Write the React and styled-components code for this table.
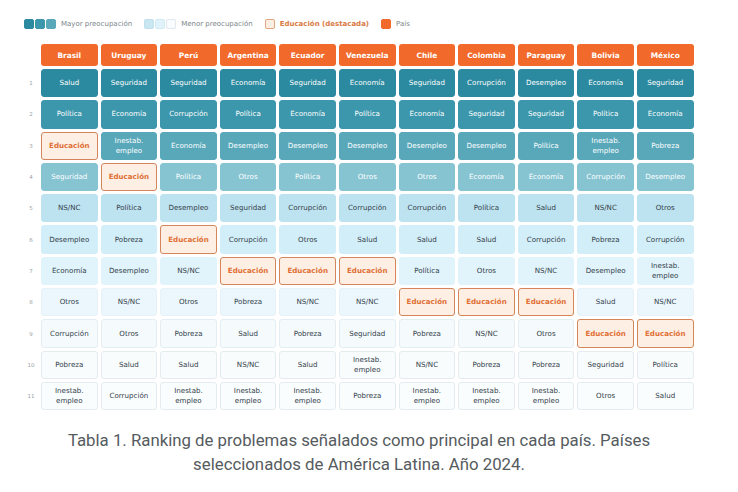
import React from "react";
import styled, { createGlobalStyle } from "styled-components";

const GlobalStyle = createGlobalStyle`
  body {
    margin: 0;
    background: #ffffff;
    font-family: "DejaVu Sans", sans-serif;
  }
`;

const countries = [
  "Brasil", "Uruguay", "Perú", "Argentina", "Ecuador", "Venezuela",
  "Chile", "Colombia", "Paraguay", "Bolivia", "México",
];

const ranking = {
  Brasil: ["Salud", "Política", "Educación", "Seguridad", "NS/NC", "Desempleo", "Economía", "Otros", "Corrupción", "Pobreza", "Inestab. empleo"],
  Uruguay: ["Seguridad", "Economía", "Inestab. empleo", "Educación", "Política", "Pobreza", "Desempleo", "NS/NC", "Otros", "Salud", "Corrupción"],
  "Perú": ["Seguridad", "Corrupción", "Economía", "Política", "Desempleo", "Educación", "NS/NC", "Otros", "Pobreza", "Salud", "Inestab. empleo"],
  Argentina: ["Economía", "Política", "Desempleo", "Otros", "Seguridad", "Corrupción", "Educación", "Pobreza", "Salud", "NS/NC", "Inestab. empleo"],
  Ecuador: ["Seguridad", "Economía", "Desempleo", "Política", "Corrupción", "Otros", "Educación", "NS/NC", "Pobreza", "Salud", "Inestab. empleo"],
  Venezuela: ["Economía", "Política", "Desempleo", "Otros", "Corrupción", "Salud", "Educación", "NS/NC", "Seguridad", "Inestab. empleo", "Pobreza"],
  Chile: ["Seguridad", "Economía", "Desempleo", "Otros", "Corrupción", "Salud", "Política", "Educación", "Pobreza", "NS/NC", "Inestab. empleo"],
  Colombia: ["Corrupción", "Seguridad", "Desempleo", "Economía", "Política", "Salud", "Otros", "Educación", "NS/NC", "Pobreza", "Inestab. empleo"],
  Paraguay: ["Desempleo", "Seguridad", "Política", "Economía", "Salud", "Corrupción", "NS/NC", "Educación", "Otros", "Pobreza", "Inestab. empleo"],
  Bolivia: ["Economía", "Política", "Inestab. empleo", "Corrupción", "NS/NC", "Pobreza", "Desempleo", "Salud", "Educación", "Seguridad", "Otros"],
  "México": ["Seguridad", "Economía", "Pobreza", "Desempleo", "Otros", "Corrupción", "Inestab. empleo", "NS/NC", "Educación", "Política", "Salud"],
};

// shade per rank, darkest first
const shades = [
  { bg: "#2b8a9f", border: "#2b8a9f", fg: "#ffffff" },
  { bg: "#3c97ac", border: "#3c97ac", fg: "#ffffff" },
  { bg: "#58a8ba", border: "#58a8ba", fg: "#ffffff" },
  { bg: "#86c4d1", border: "#86c4d1", fg: "#ffffff" },
  { bg: "#bee3f0", border: "#bee3f0", fg: "#33414a" },
  { bg: "#d2eef8", border: "#d2eef8", fg: "#33414a" },
  { bg: "#e1f4fb", border: "#e1f4fb", fg: "#33414a" },
  { bg: "#ebf7fd", border: "#e6f2f7", fg: "#33414a" },
  { bg: "#f5fbfd", border: "#e4edf1", fg: "#33414a" },
  { bg: "#f8fcfd", border: "#e4ecf0", fg: "#33414a" },
  { bg: "#fafdfe", border: "#e4ecef", fg: "#33414a" },
];

const Page = styled.div`
  width: 738px;
  height: 492px;
  padding: 17px 0 0 22px;
  box-sizing: border-box;
`;

const Legend = styled.div`
  display: flex;
  align-items: center;
  gap: 12px;
  height: 14px;
  padding-left: 2px;
  font-size: 7px;
  color: #7c8589;
`;

const LegendItem = styled.div`
  display: flex;
  align-items: center;
  gap: 5px;
  color: ${(p) => p.$color || "#7c8589"};
  font-weight: ${(p) => (p.$bold ? 700 : 400)};
`;

const Swatches = styled.div`
  display: flex;
  gap: 1px;
`;

const Swatch = styled.span`
  width: 8px;
  height: 8px;
  border-radius: 2px;
  background: ${(p) => p.$bg};
  border: 1px solid ${(p) => p.$border || p.$bg};
`;

const Table = styled.div`
  display: grid;
  grid-template-columns: 16px repeat(11, 56.6px);
  grid-template-rows: 22px repeat(11, 28.3px);
  column-gap: 3px;
  row-gap: 3px;
  margin-top: 13px;
`;

const Corner = styled.div``;

const Header = styled.div`
  border-radius: 3px;
  background: #f26a2b;
  color: #ffffff;
  font-size: 7.4px;
  font-weight: 700;
  display: flex;
  align-items: center;
  justify-content: center;
`;

const Rank = styled.div`
  display: flex;
  align-items: center;
  justify-content: center;
  font-size: 5.5px;
  color: #9aa2a6;
  margin-left: 2px;
`;

const Cell = styled.div`
  border-radius: 3px;
  box-sizing: border-box;
  display: flex;
  align-items: center;
  justify-content: center;
  text-align: center;
  font-size: 7.1px;
  line-height: 10px;
  padding: 0 4px;
  background: ${(p) => (p.$edu ? "#fdefe4" : p.$shade.bg)};
  border: ${(p) => (p.$edu ? "1.5px solid #d4855a" : `1px solid ${p.$shade.border}`)};
  color: ${(p) => (p.$edu ? "#e06f35" : p.$shade.fg)};
  font-weight: ${(p) => (p.$edu ? 700 : 500)};
`;

const Caption = styled.p`
  margin: 18px 0 0 -22px;
  width: 718px;
  text-align: center;
  font-family: Roboto, "Liberation Sans", sans-serif;
  font-size: 16.8px;
  line-height: 24px;
  color: #555b5e;
`;

export default function App() {
  return (
    <Page>
      <GlobalStyle />
      <Legend>
        <LegendItem>
          <Swatches>
            <Swatch $bg="#2b8a9f" />
            <Swatch $bg="#3c97ac" />
            <Swatch $bg="#58a8ba" />
          </Swatches>
          Mayor preocupación
        </LegendItem>
        <LegendItem>
          <Swatches>
            <Swatch $bg="#c8e7f2" $border="#bfe1ee" />
            <Swatch $bg="#e0f3fa" $border="#d3eaf3" />
            <Swatch $bg="#f8fcfd" $border="#dfe9ee" />
          </Swatches>
          Menor preocupación
        </LegendItem>
        <LegendItem $color="#d87a45" $bold>
          <Swatch $bg="#fdefe4" $border="#e3a77f" />
          Educación (destacada)
        </LegendItem>
        <LegendItem>
          <Swatch $bg="#f26a2b" />
          País
        </LegendItem>
      </Legend>
      <Table>
        <Corner />
        {countries.map((c) => (
          <Header key={c}>{c}</Header>
        ))}
        {shades.map((shade, i) => (
          <React.Fragment key={i}>
            <Rank>{i + 1}</Rank>
            {countries.map((c) => {
              const item = ranking[c][i];
              return (
                <Cell key={c} $shade={shade} $edu={item === "Educación"}>
                  {item}
                </Cell>
              );
            })}
          </React.Fragment>
        ))}
      </Table>
      <Caption>
        Tabla 1. Ranking de problemas señalados como principal en cada país. Países
        <br />
        seleccionados de América Latina. Año 2024.
      </Caption>
    </Page>
  );
}
